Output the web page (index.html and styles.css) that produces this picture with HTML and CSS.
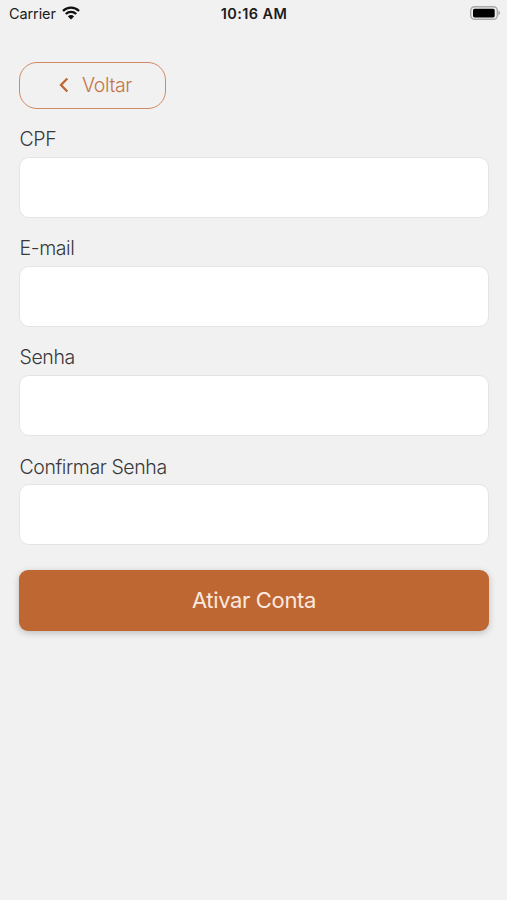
FILE: index.html
```html
<!DOCTYPE html>
<html lang="pt-BR">
<head>
<meta charset="utf-8">
<meta name="viewport" content="width=device-width, initial-scale=1">
<title>Ativar Conta</title>
<link rel="stylesheet" href="styles.css">
</head>
<body>
<header class="status">
  <div class="network">
    <span class="carrier">Carrier</span>
    <svg class="wifi" viewBox="0 0 18 14" width="18" height="14" aria-hidden="true">
      <path d="M1 5A11.3 11.3 0 0 1 17 5M3.8 8A7.4 7.4 0 0 1 14.2 8" fill="none" stroke="#111" stroke-width="2.3"/>
      <path d="M9 13.6L5.9 10.4A4.4 4.4 0 0 1 12.1 10.4Z" fill="#111"/>
    </svg>
  </div>
  <time class="time">10:16 AM</time>
  <svg class="battery" viewBox="0 0 32 16" width="32" height="16" aria-hidden="true">
    <rect x="1.7" y="1.7" width="26.6" height="12.6" rx="3.8" fill="#eee" stroke="#a9a9a9" stroke-width="1.4"/>
    <rect x="4" y="3.8" width="21.7" height="8.6" rx="1.6" fill="#000"/>
    <path d="M29.3 5.6Q31.2 6.6 31.2 8T29.3 10.4Z" fill="#a9a9a9"/>
  </svg>
</header>
<main class="page">
  <button class="back" type="button">
    <svg viewBox="0 0 10 16" width="10" height="16" aria-hidden="true"><path d="M8.3 1.5L2 8L8.3 14.5" fill="none" stroke="#bf6733" stroke-width="2.3"/></svg>
    <span>Voltar</span>
  </button>
  <form class="form">
    <div class="field"><label for="cpf">CPF</label><input id="cpf" type="text"></div>
    <div class="field"><label for="email">E-mail</label><input id="email" type="email"></div>
    <div class="field"><label for="senha">Senha</label><input id="senha" type="password"></div>
    <div class="field"><label for="confirmar">Confirmar Senha</label><input id="confirmar" type="password"></div>
    <button class="submit" type="button">Ativar Conta</button>
  </form>
</main>
</body>
</html>
```
FILE: styles.css
```css
* { box-sizing: border-box; }
body {
  margin: 0;
  min-height: 900px;
  background: #f1f1f1;
  color: #38383a;
  font-family: Inter, "Liberation Sans", sans-serif;
}
button, input { font: inherit; margin: 0; }
.status {
  display: grid;
  grid-template-columns: 1fr auto 1fr;
  align-items: center;
  height: 28px;
  padding: 0 8px 1px 9px;
  color: #1b1b1b;
  font-size: 14.5px;
}
.network { display: flex; align-items: center; gap: 6px; }
.carrier { letter-spacing: -0.1px; }
.wifi { margin-top: -1px; }
.time { font-weight: 600; letter-spacing: 0.38px; }
.battery { justify-self: end; margin: -1px -2px 0 0; }
.page { padding: 34px 18px 0 19px; }
.back {
  display: flex;
  align-items: center;
  gap: 12px;
  width: 147px;
  height: 47px;
  padding: 0 0 1px 39px;
  border: 1px solid #d08a63;
  border-radius: 18px;
  background: transparent;
  color: #c47549;
  font-size: 19.5px;
  font-weight: 300;
  letter-spacing: -0.4px;
}
.back span { margin-left: 1px; }
.form { padding-top: 18px; }
.field { height: 109.2px; }
.field label {
  display: block;
  height: 29.5px;
  padding-left: 0.5px;
  line-height: 25px;
  font-size: 19.5px;
  font-weight: 300;
  letter-spacing: -0.4px;
}
.field input {
  display: block;
  width: 100%;
  height: 61px;
  padding: 0 16px;
  border: 1px solid #e4e4e4;
  border-radius: 10px;
  background: #fff;
}
.submit {
  display: block;
  width: 100%;
  height: 61px;
  margin-top: 6px;
  padding: 0;
  border: 0;
  border-radius: 9px;
  background: #bf6733;
  box-shadow: 0 2px 7px rgba(0, 0, 0, 0.22);
  color: #fbe9df;
  font-size: 22px;
  font-weight: 400;
  letter-spacing: -0.35px;
}
```
